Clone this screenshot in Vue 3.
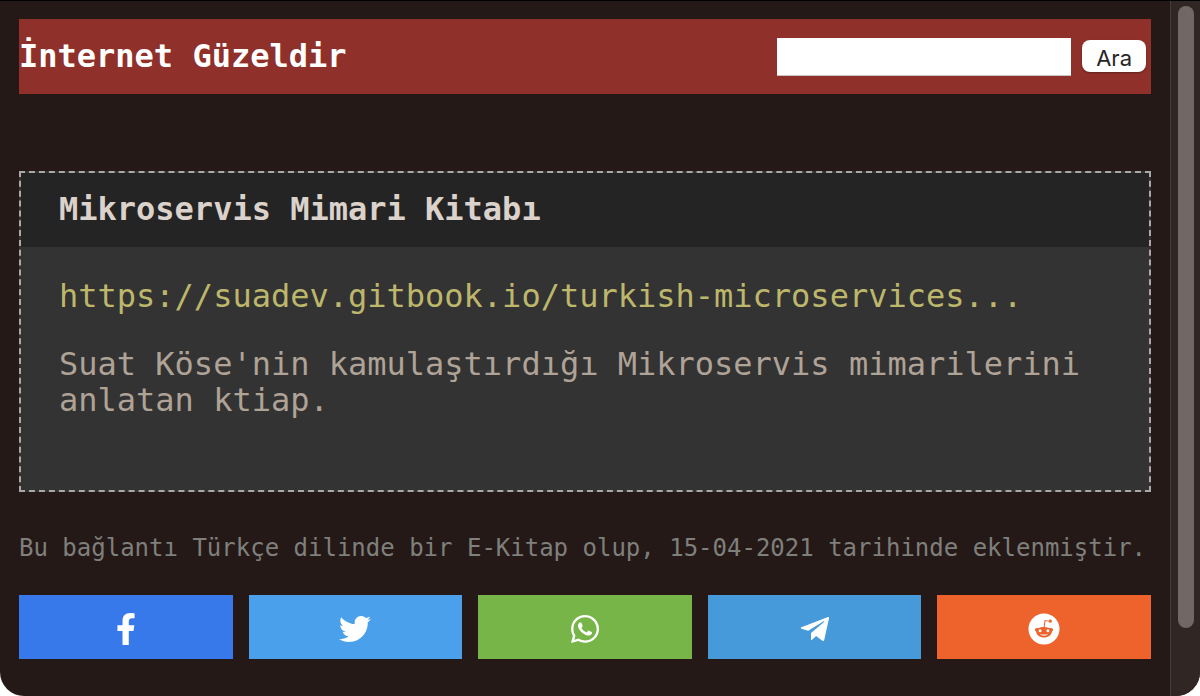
<script setup>
const shares = [
  {
    name: 'Facebook', key: 'facebook', box: '0 0 320 512',
    path: 'M279.14 288l14.22-92.66h-88.91v-60.13c0-25.35 12.42-50.06 52.24-50.06h40.42V6.26S260.43 0 225.36 0c-73.22 0-121.08 44.38-121.08 124.72v70.62H22.89V288h81.39v224h100.17V288z'
  },
  {
    name: 'Twitter', key: 'twitter', box: '0 0 512 512',
    path: 'M459.37 151.716c.325 4.548.325 9.097.325 13.645 0 138.72-105.583 298.558-298.558 298.558-59.452 0-114.68-17.219-161.137-47.106 8.447.974 16.568 1.299 25.34 1.299 49.055 0 94.213-16.568 130.274-44.832-46.132-.975-84.792-31.188-98.112-72.772 6.498.974 12.995 1.624 19.818 1.624 9.421 0 18.843-1.3 27.614-3.573-48.081-9.747-84.143-51.98-84.143-102.985v-1.299c13.969 7.797 30.214 12.67 47.431 13.319-28.264-18.843-46.781-51.005-46.781-87.391 0-19.492 5.197-37.36 14.294-52.954 51.655 63.675 129.3 105.258 216.365 109.807-1.624-7.797-2.599-15.918-2.599-24.04 0-57.828 46.782-104.934 104.934-104.934 30.213 0 57.502 12.67 76.67 33.137 23.715-4.548 46.456-13.32 66.599-25.34-7.798 24.366-24.366 44.833-46.132 57.827 21.117-2.273 41.584-8.122 60.426-16.243-14.292 20.791-32.161 39.308-52.628 54.253z'
  },
  {
    name: 'WhatsApp', key: 'whatsapp', box: '0 0 448 512',
    path: 'M380.9 97.1C339 55.1 283.2 32 223.9 32c-122.4 0-222 99.6-222 222 0 39.1 10.2 77.3 29.6 111L0 480l117.7-30.9c32.4 17.7 68.9 27 106.1 27h.1c122.3 0 224.1-99.6 224.1-222 0-59.3-25.2-115-67.1-157zm-157 341.6c-33.2 0-65.7-8.9-94-25.7l-6.7-4-69.8 18.3L72 359.2l-4.4-7c-18.5-29.4-28.2-63.3-28.2-98.2 0-101.7 82.8-184.5 184.6-184.5 49.3 0 95.6 19.2 130.4 54.1 34.8 34.9 56.2 81.2 56.1 130.5 0 101.8-84.9 184.6-186.6 184.6zm101.2-138.2c-5.5-2.8-32.8-16.2-37.9-18-5.1-1.9-8.8-2.8-12.5 2.8-3.7 5.6-14.3 18-17.6 21.8-3.2 3.7-6.5 4.2-12 1.4-32.6-16.3-54-29.1-75.5-66-5.7-9.8 5.7-9.1 16.3-30.3 1.8-3.7.9-6.9-.5-9.7-1.4-2.8-12.5-30.1-17.1-41.2-4.5-10.8-9.1-9.3-12.5-9.5-3.2-.2-6.9-.2-10.6-.2-3.7 0-9.7 1.4-14.8 6.9-5.1 5.6-19.4 19-19.4 46.3 0 27.3 19.9 53.7 22.6 57.4 2.8 3.7 39.1 59.7 94.8 83.8 35.2 15.2 49 16.5 66.6 13.9 10.7-1.6 32.8-13.4 37.4-26.4 4.6-13 4.6-24.1 3.2-26.4-1.3-2.5-5-3.9-10.5-6.6z'
  },
  {
    name: 'Telegram', key: 'telegram', box: '0 0 32 32',
    path: 'M29 4L2.400 14.300c-.9.4-.9 1.100 0 1.400l6.800 2.100L24.200 8.600c.9-.5 1.500-.1.8.5L12 20v7.200c.5 0 .9-.2 1.300-.6l3.800-3.600 6 4.600c1.100.7 1.900.3 2.200-.9L30 5.200c.3-1-.3-1.500-1-1.200z'
  },
  {
    name: 'Reddit', key: 'reddit', box: '0 0 32 32',
    path: 'M16 .5a15.500 15.500 0 1 0 0 31 15.500 15.500 0 0 0 0-31zM22.200 6.600a1.600 1.600 0 1 1-1.500 2l-3.200-.5-.8 6c1.900.1 3.700.5 5.100 1.200 1.400-.9 3.500.1 3.300 1.600 0 .8-.6 1.300-1.200 1.600-.3 3.600-3.500 6-7.900 6s-7.600-2.400-7.900-6c-.6-.3-1.200-.8-1.200-1.600-.2-1.500 1.900-2.500 3.300-1.600 1.500-.8 3.400-1.200 5.400-1.200l.9-6.600c0-.3.200-.4.4-.4l3.900.7c.3-.7.8-1.200 1.400-1.200zM12.100 16.300a1.500 1.500 0 1 0 0 3 1.500 1.500 0 0 0 0-3zm7.800 0a1.500 1.500 0 1 0 0 3 1.500 1.500 0 0 0 0-3zm-7.300 4.900c-.4.4 0 1 .4.9 1.900.7 4.100.7 6 0 .5.1.8-.5.4-.9-2 .5-4.800.5-6.800 0z'
  }
]
</script>

<template>
  <div class="window">
    <main class="page">
      <header class="bar">
        <h1>İnternet Güzeldir</h1>
        <form class="search" @submit.prevent>
          <input type="search" aria-label="Ara">
          <button type="submit">Ara</button>
        </form>
      </header>

      <article class="card">
        <h2>Mikroservis Mimari Kitabı</h2>
        <div class="body">
          <a href="https://suadev.gitbook.io/">https://suadev.gitbook.io/turkish-microservices...</a>
          <p>Suat Köse'nin kamulaştırdığı Mikroservis mimarilerini anlatan ktiap.</p>
        </div>
      </article>

      <p class="meta">Bu bağlantı Türkçe dilinde bir E-Kitap olup, 15-04-2021 tarihinde eklenmiştir.</p>

      <nav class="shares">
        <a v-for="s in shares" :key="s.key" href="#" :class="s.key" :aria-label="s.name">
          <svg :viewBox="s.box" aria-hidden="true"><path fill-rule="evenodd" :d="s.path" /></svg>
        </a>
      </nav>
    </main>
    <div class="track"><div class="thumb"></div></div>
  </div>
</template>

<style>
html {
  background: #fff;
}
</style>

<style scoped>
.window {
  display: flex;
  box-sizing: border-box;
  min-height: 100vh;
  overflow: hidden;
  border-top: 1px solid #000;
  border-radius: 0 0 24px 24px;
  background: #241917;
  font-family: "DejaVu Sans Mono", "Liberation Mono", monospace;
}
.page {
  flex: 1;
  min-width: 0;
  padding: 18px 19px 37px;
}
.bar {
  display: flex;
  align-items: flex-start;
  justify-content: space-between;
  min-height: 75px;
  padding: 19px 5px 18px 0;
  box-sizing: border-box;
  background: #8f302a;
}
h1, h2 {
  margin: 0;
  font-size: 32px;
  line-height: 36px;
}
h1 {
  color: #fff;
}
.search {
  display: flex;
  align-items: flex-start;
  gap: 11px;
}
.search input {
  box-sizing: border-box;
  width: 294px;
  height: 38px;
  padding: 0 6px;
  border: 0;
  border-bottom: 1px solid #c8c4c4;
  border-radius: 0;
  background: #fff;
  font-size: 22px;
  appearance: none;
}
.search button {
  height: 32px;
  margin: 2px 0 0;
  padding: 4px 14px 0;
  border: 0;
  border-radius: 8px;
  background: #fff;
  box-shadow: 0 1px 2px rgba(0, 0, 0, 0.3);
  color: #262626;
  font-family: Inter, Roboto, sans-serif;
  font-size: 22px;
  line-height: 28px;
}
.card {
  box-sizing: border-box;
  min-height: 321px;
  margin-top: 77px;
  border: 2px dashed #aaa8a8;
  background: #333;
}
.card h2 {
  padding: 18px 38px 20px;
  background: #242424;
  color: #dbd2cc;
}
.body {
  padding: 31px 38px;
  font-size: 32px;
  line-height: 36px;
}
.body a {
  display: block;
  color: #bdb76b;
  text-decoration: none;
}
.body p {
  margin: 32px 0 0;
  color: #afa296;
}
.meta {
  margin: 42px 0 33px;
  color: #7f7f7c;
  font-size: 24px;
  line-height: 28px;
}
.shares {
  display: grid;
  grid-template-columns: repeat(5, 1fr);
  gap: 16px;
}
.shares a {
  display: flex;
  align-items: center;
  justify-content: center;
  height: 64px;
  padding-top: 4px;
  box-sizing: border-box;
}
.shares svg {
  height: 32px;
  fill: #fff;
}
.facebook { background: #3779eb; }
.twitter { background: #4aa0eb; }
.whatsapp { background: #78b548; }
.telegram { background: #479ad9; }
.reddit { background: #ee632c; }
.track {
  display: flex;
  flex-direction: column;
  width: 30px;
  box-sizing: border-box;
  padding: 5px 6px 5px 7px;
  border-left: 1px solid #463b39;
  background: #302624;
}
.thumb {
  height: 91%;
  max-height: 622px;
  border-radius: 8px;
  background: #716765;
}
</style>
